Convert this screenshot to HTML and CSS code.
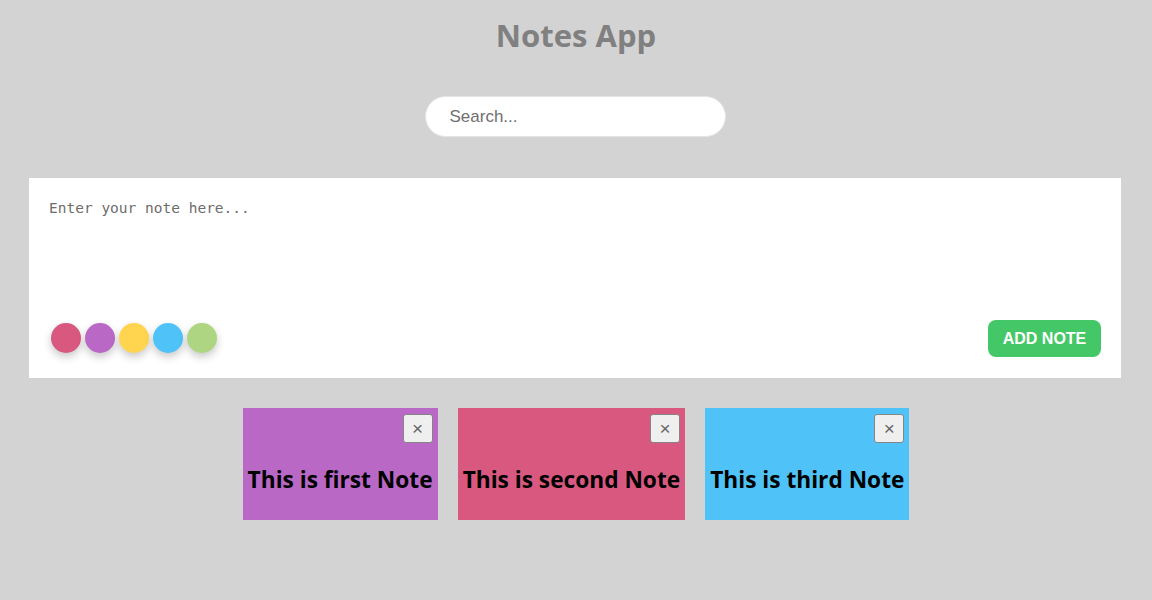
FILE: index.html
```html
<!DOCTYPE html>
<html lang="en">
<head>
<meta charset="utf-8">
<title>Notes App</title>
<link rel="stylesheet" href="styles.css">
</head>
<body>
  <header class="header">
    <h1 class="title">Notes App</h1>
  </header>
  <div class="search-row">
    <input class="search" type="text" placeholder="Search...">
  </div>
  <section class="editor">
    <textarea class="note-input" placeholder="Enter your note here..." autofocus></textarea>
    <div class="editor-footer">
      <div class="colors">
        <span class="dot pink"></span>
        <span class="dot purple"></span>
        <span class="dot yellow"></span>
        <span class="dot blue"></span>
        <span class="dot green"></span>
      </div>
      <button class="add-btn">ADD NOTE</button>
    </div>
  </section>
  <section class="notes">
    <div class="note purple">
      <button class="close">&times;</button>
      <h2 class="note-text">This is first Note</h2>
    </div>
    <div class="note pink">
      <button class="close">&times;</button>
      <h2 class="note-text">This is second Note</h2>
    </div>
    <div class="note blue">
      <button class="close">&times;</button>
      <h2 class="note-text">This is third Note</h2>
    </div>
  </section>
</body>
</html>
```

FILE: styles.css
```css
html, body {
  margin: 0;
  padding: 0;
}
body {
  background: #d3d3d3;
  font-family: "Open Sans", "DejaVu Sans", sans-serif;
  height: 600px;
}
.header {
  display: flex;
  justify-content: center;
  padding-top: 14px;
}
.title {
  margin: 0;
  font-size: 31px;
  line-height: 42px;
  font-weight: 700;
  color: #808080;
}
.search-row {
  display: flex;
  justify-content: center;
  padding-top: 40px;
  padding-right: 2px;
}
.search {
  box-sizing: border-box;
  width: 301px;
  height: 41px;
  border: 1px solid #e4e4e4;
  border-radius: 21px;
  background: #fff;
  padding: 0 24px;
  font-family: "Liberation Sans", Arial, sans-serif;
  font-size: 17px;
  color: #333;
  outline: none;
}
.search::placeholder {
  color: #6f6f6f;
}
.editor {
  box-sizing: border-box;
  margin: 41px 0 0 29px;
  width: 1092px;
  height: 200px;
  background: #fff;
  padding: 20px 20px 20px 20px;
  display: flex;
  flex-direction: column;
}
.note-input {
  flex: 1;
  border: none;
  outline: none;
  resize: none;
  padding: 0;
  margin: 0;
  font-family: "DejaVu Sans Mono", monospace;
  font-size: 14.5px;
  line-height: 20px;
  caret-color: #000;
}
.note-input::placeholder {
  color: #6d6d6d;
}
.editor-footer {
  display: flex;
  align-items: center;
  justify-content: space-between;
  padding-left: 2px;
  margin-bottom: 1px;
}
.colors {
  display: flex;
  gap: 4px;
}
.dot {
  width: 30px;
  height: 30px;
  border-radius: 50%;
  box-shadow: 0 4px 8px rgba(0, 0, 0, 0.22);
}
.pink { background: #d9587f; }
.purple { background: #b968c6; }
.yellow { background: #ffd54f; }
.blue { background: #4fc3f7; }
.green { background: #aed582; }
.add-btn {
  width: 113px;
  height: 37px;
  border: none;
  border-radius: 8px;
  background: #44c767;
  color: #fff;
  font-family: "Liberation Sans", Arial, sans-serif;
  font-weight: 700;
  font-size: 16px;
  padding: 0;
  margin-top: 2px;
}
.notes {
  display: flex;
  justify-content: center;
  gap: 20px;
  margin-top: 30px;
}
.note {
  height: 112px;
  padding: 0 5px;
  display: flex;
  flex-direction: column;
}
.note.purple { background: #b968c6; }
.note.pink { background: #d9587f; }
.note.blue { background: #4fc3f7; }
.close {
  align-self: flex-end;
  margin-top: 6px;
  width: 30px;
  height: 29px;
  padding: 0;
  background: #efefef;
  border: 1px solid #858585;
  border-radius: 3px;
  color: #666;
  font-family: "Liberation Sans", Arial, sans-serif;
  font-size: 19px;
  line-height: 25px;
}
.note-text {
  margin: 21px 0 0 0;
  font-family: "Open Sans", sans-serif;
  font-weight: 700;
  font-size: 22.7px;
  line-height: 32px;
  color: #000;
  white-space: nowrap;
}
```
